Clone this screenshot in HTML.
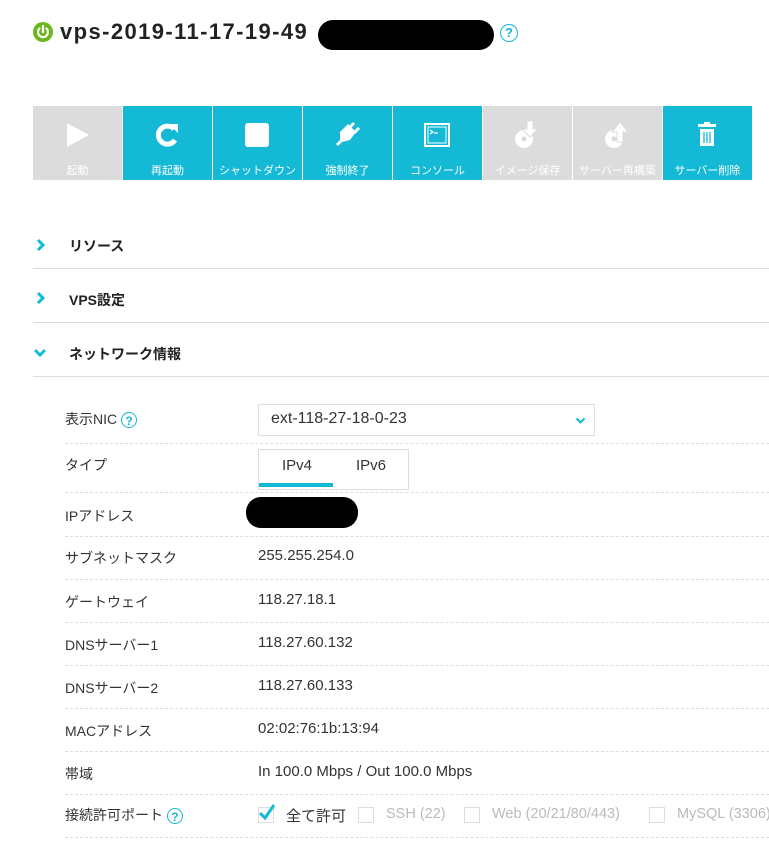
<!DOCTYPE html>
<html><head><meta charset="utf-8"><style>
body{margin:0;width:769px;height:852px;overflow:hidden;background:#fff;font-family:"Liberation Sans","Noto Sans CJK JP",sans-serif;color:#333;position:relative}
.a{position:absolute;white-space:nowrap}
.btn{position:absolute;top:106px;width:89px;height:74px;color:#fff;font-size:11px;text-align:center}
.btn .l{position:absolute;left:0;right:0;top:56px}
.btn svg{position:absolute;left:29px;top:14px}
.on{background:#14b9d6}.off{background:#dcdcdc}
.sec{position:absolute;left:69px;font-size:14px;font-weight:bold;color:#222}
.hl{position:absolute;left:33px;width:736px;height:1px;background:#ddd}
.lab{position:absolute;left:65px;font-size:14px;color:#333;white-space:nowrap}
.val{position:absolute;left:258px;font-size:15px;color:#333;white-space:nowrap}
.dl{position:absolute;left:65px;width:704px;border-top:1px dashed #ddd}
.q{display:inline-block;width:16px;height:16px;border:1.5px solid #14b9d6;border-radius:50%;color:#14b9d6;font-size:12px;line-height:16px;text-align:center;font-weight:bold;box-sizing:border-box;vertical-align:middle}
.cb{position:absolute;top:807px;width:14px;height:14px;border:1px solid #ddd;background:#fff}
.gr{position:absolute;top:806px;font-size:14.5px;color:#bbb;white-space:nowrap}
</style></head><body>
<svg class="a" style="left:33px;top:22px" width="20" height="20" viewBox="0 0 20 20"><circle cx="10" cy="10" r="10" fill="#6cb71f"/><path d="M6.5 6.5a5 5 0 1 0 7 0" stroke="#fff" stroke-width="2.2" fill="none" stroke-linecap="round"/><path d="M10 4v6" stroke="#fff" stroke-width="2.2" stroke-linecap="round"/></svg>
<div class="a" style="left:60px;top:19px;font-size:22px;letter-spacing:1.4px;font-weight:bold;color:#222">vps-2019-11-17-19-49</div>
<div class="a" style="left:318px;top:20px;width:176px;height:30px;border-radius:15px;background:#000"></div>
<div class="a" style="left:500px;top:24px"><span class="q" style="width:18px;height:18px;line-height:15px;font-size:13px">?</span></div>

<div class="btn off" style="left:33px"><svg width="30" height="30" viewBox="0 0 30 30"><path d="M5 3L27 15L5 27Z" fill="#fff"/></svg><div class="l">起動</div></div>
<div class="btn on" style="left:123px"><svg width="30" height="30" viewBox="0 0 30 30"><path d="M22 9A9 9 0 1 0 23 20" stroke="#fff" stroke-width="5" fill="none"/><path d="M17 4L26 4L26 13Z" fill="#fff"/></svg><div class="l">再起動</div></div>
<div class="btn on" style="left:213px"><svg width="30" height="30" viewBox="0 0 30 30"><rect x="3" y="3" width="24" height="24" rx="3" fill="#fff"/></svg><div class="l">シャットダウン</div></div>
<div class="btn on" style="left:303px"><svg width="30" height="30" viewBox="0 0 30 30"><path d="M8 12L16 4L24 12L18 20L10 22L6 26L4 24L8 20Z" fill="#fff"/><path d="M17 8L22 3M22 13L27 8" stroke="#fff" stroke-width="3"/></svg><div class="l">強制終了</div></div>
<div class="btn on" style="left:393px"><svg width="30" height="30" viewBox="0 0 30 30"><rect x="3" y="4" width="24" height="22" fill="none" stroke="#fff" stroke-width="2"/><rect x="6" y="7" width="18" height="16" fill="none" stroke="#fff" stroke-width="1"/><path d="M8 10l3 2-3 2M12 13h4" stroke="#fff" stroke-width="1.2" fill="none"/></svg><div class="l">コンソール</div></div>
<div class="btn off" style="left:483px"><svg width="30" height="30" viewBox="0 0 30 30"><circle cx="12" cy="19" r="9" fill="#fff"/><circle cx="12" cy="19" r="2.5" fill="#dcdcdc"/><path d="M15 1h6v8h5l-8 8-8-8h5z" fill="#fff" stroke="#dcdcdc"/></svg><div class="l">イメージ保存</div></div>
<div class="btn off" style="left:573px"><svg width="30" height="30" viewBox="0 0 30 30"><circle cx="12" cy="19" r="9" fill="#fff"/><circle cx="12" cy="19" r="2.5" fill="#dcdcdc"/><path d="M15 22v-10h-5l8-10 8 10h-5v10z" fill="#fff" stroke="#dcdcdc"/></svg><div class="l">サーバー再構築</div></div>
<div class="btn on" style="left:663px"><svg width="30" height="30" viewBox="0 0 30 30"><rect x="6" y="4" width="18" height="3" fill="#fff"/><rect x="12" y="2" width="6" height="3" fill="#fff"/><path d="M8 9h14v17H8z" fill="#fff"/><path d="M12 12v11M15 12v11M18 12v11" stroke="#14b9d6" stroke-width="1.3"/></svg><div class="l">サーバー削除</div></div>

<svg class="a" style="left:36px;top:238px" width="10" height="14"><path d="M2 2l5 5-5 5" stroke="#14b9d6" stroke-width="3" fill="none"/></svg>
<div class="sec" style="top:236px">リソース</div><div class="hl" style="top:268px"></div>
<svg class="a" style="left:36px;top:291px" width="10" height="14"><path d="M2 2l5 5-5 5" stroke="#14b9d6" stroke-width="3" fill="none"/></svg>
<div class="sec" style="top:290px">VPS設定</div><div class="hl" style="top:322px"></div>
<svg class="a" style="left:33px;top:348px" width="14" height="10"><path d="M2 2l5 5 5-5" stroke="#14b9d6" stroke-width="3" fill="none"/></svg>
<div class="sec" style="top:344px">ネットワーク情報</div><div class="hl" style="top:376px"></div>

<div class="lab" style="top:409px">表示NIC <span class="q">?</span></div>
<div class="a" style="left:258px;top:404px;width:335px;height:30px;border:1px solid #ddd"></div>
<div class="val" style="left:271px;top:410px;font-size:16px">ext-118-27-18-0-23</div>
<svg class="a" style="left:575px;top:417px" width="11" height="8"><path d="M1.5 1.5l4 4 4-4" stroke="#14b9d6" stroke-width="2" fill="none"/></svg>
<div class="dl" style="top:443px"></div>
<div class="lab" style="top:455px">タイプ</div>
<div class="a" style="left:258px;top:449px;width:149px;height:39px;border:1px solid #ddd"></div>
<div class="val" style="left:282px;top:457px">IPv4</div><div class="val" style="left:356px;top:457px">IPv6</div>
<div class="a" style="left:259px;top:483px;width:74px;height:4px;background:#14b9d6"></div>
<div class="dl" style="top:492px"></div>
<div class="lab" style="top:506px">IPアドレス</div>
<div class="a" style="left:246px;top:497px;width:112px;height:31px;border-radius:15px;background:#000"></div>
<div class="dl" style="top:536px"></div>
<div class="lab" style="top:548px">サブネットマスク</div><div class="val" style="top:547px">255.255.254.0</div>
<div class="dl" style="top:579px"></div>
<div class="lab" style="top:592px">ゲートウェイ</div><div class="val" style="top:591px">118.27.18.1</div>
<div class="dl" style="top:622px"></div>
<div class="lab" style="top:635px">DNSサーバー1</div><div class="val" style="top:634px">118.27.60.132</div>
<div class="dl" style="top:665px"></div>
<div class="lab" style="top:678px">DNSサーバー2</div><div class="val" style="top:677px">118.27.60.133</div>
<div class="dl" style="top:708px"></div>
<div class="lab" style="top:721px">MACアドレス</div><div class="val" style="top:720px">02:02:76:1b:13:94</div>
<div class="dl" style="top:751px"></div>
<div class="lab" style="top:764px">帯域</div><div class="val" style="top:763px">In 100.0 Mbps / Out 100.0 Mbps</div>
<div class="dl" style="top:794px"></div>
<div class="lab" style="top:805px">接続許可ポート <span class="q">?</span></div>
<div class="cb" style="left:258px"></div>
<svg class="a" style="left:258px;top:803px" width="18" height="18"><path d="M2 10l5 5 9-13" stroke="#14b9d6" stroke-width="3" fill="none"/></svg>
<div class="val" style="left:286px;top:805px">全て許可</div>
<div class="cb" style="left:358px"></div><div class="gr" style="left:386px">SSH (22)</div>
<div class="cb" style="left:464px"></div><div class="gr" style="left:492px">Web (20/21/80/443)</div>
<div class="cb" style="left:649px"></div><div class="gr" style="left:677px">MySQL (3306)</div>
<div class="dl" style="top:837px"></div>
</body></html>
